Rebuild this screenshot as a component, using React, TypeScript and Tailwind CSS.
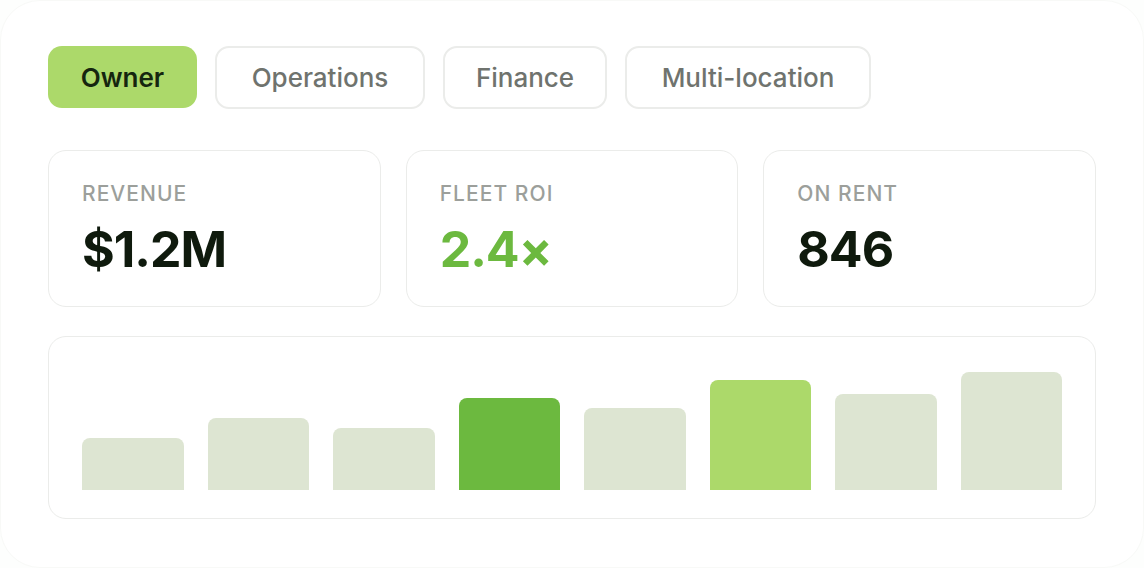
import React from "react";

const tabs = [
  { label: "Owner", w: "w-[149px]" },
  { label: "Operations", w: "w-[210px]" },
  { label: "Finance", w: "w-[164px]" },
  { label: "Multi-location", w: "w-[246px]" },
];

const stats = [
  { label: "REVENUE", value: "$1.2M", green: false },
  { label: "FLEET ROI", value: "2.4×", green: true },
  { label: "ON RENT", value: "846", green: false },
];

const bars: { h: number; tone: "muted" | "dark" | "light" }[] = [
  { h: 52, tone: "muted" },
  { h: 72, tone: "muted" },
  { h: 62, tone: "muted" },
  { h: 92, tone: "dark" },
  { h: 82, tone: "muted" },
  { h: 110, tone: "light" },
  { h: 96, tone: "muted" },
  { h: 118, tone: "muted" },
];

const toneClass = {
  muted: "bg-[#dde5d2]",
  dark: "bg-[#6cb93f]",
  light: "bg-[#acd96a]",
};

export default function App() {
  return (
    <div
      className="w-[1144px] h-[568px] bg-[#fdfefd] overflow-hidden"
      style={{ fontFamily: "Inter, 'Noto Sans', sans-serif" }}
    >
      <div className="w-full h-full bg-white rounded-[40px] border border-[#f8f9f7] px-[47px] pt-[45px]">
        {/* segment tabs */}
        <div className="flex gap-[18px]">
          {tabs.map((t, i) =>
            i === 0 ? (
              <div
                key={t.label}
                className={`${t.w} h-[62px] flex items-center justify-center rounded-[14px] bg-[#acd96a] text-[#15260f] text-[26px] font-semibold`}
              >
                {t.label}
              </div>
            ) : (
              <div
                key={t.label}
                className={`${t.w} h-[63px] flex items-center justify-center rounded-[14px] border-2 border-[#ebecea] bg-white text-[#6f736e] text-[26px] font-medium`}
              >
                {t.label}
              </div>
            )
          )}
        </div>

        {/* stat cards */}
        <div className="mt-[41px] grid grid-cols-3 gap-[25px]">
          {stats.map((s) => (
            <div
              key={s.label}
              className="h-[157px] rounded-[18px] border-[1.5px] border-[#ebecea] bg-white pl-[33px] pt-[31px]"
            >
              <div className="text-[21px] leading-[24px] tracking-[0.05em] text-[#9c9f9b] font-medium">
                {s.label}
              </div>
              <div
                className={`mt-[15px] text-[50px] leading-[56px] font-bold tracking-[-0.02em] ${
                  s.green ? "text-[#6cb93f]" : "text-[#0f1a0d]"
                }`}
              >
                {s.value}
              </div>
            </div>
          ))}
        </div>

        {/* bar chart */}
        <div className="mt-[29px] h-[183px] rounded-[18px] border-[1.5px] border-[#ebecea] bg-white px-[33px] pb-[28px] flex items-end gap-[24px]">
          {bars.map((b, i) => (
            <div
              key={i}
              className={`flex-1 rounded-t-[8px] ${toneClass[b.tone]}`}
              style={{ height: b.h }}
            />
          ))}
        </div>
      </div>
    </div>
  );
}
